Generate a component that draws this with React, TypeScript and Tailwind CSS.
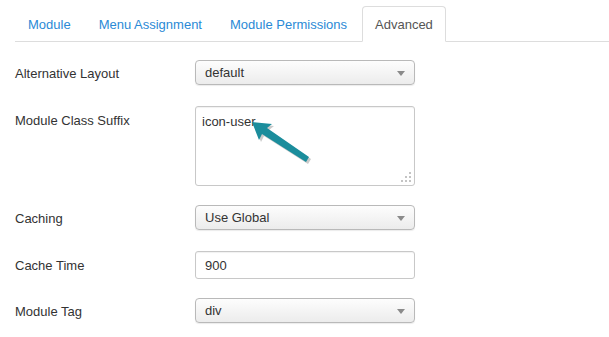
import React from "react";

const font = { fontFamily: '"Liberation Sans", Arial, sans-serif' };

function Select({ value }: { value: string }) {
  return (
    <div className="relative flex h-[25px] w-[220px] items-center rounded-[4px] border border-[#b9b9b9] bg-gradient-to-b from-[#fdfdfd] to-[#ececec] pl-[9px] pt-[1px] text-[13px] text-[#333] shadow-[0_1px_1px_rgba(0,0,0,0.08)]">
      <span>{value}</span>
      <svg className="absolute right-[9px] top-[10px]" width="8" height="5" viewBox="0 0 8 5">
        <polygon points="0,0 8,0 4,5" fill="#8a8a8a" />
      </svg>
    </div>
  );
}

function Row({ label, children, pt, mb }: { label: string; children: React.ReactNode; pt: string; mb: string }) {
  return (
    <div className={`flex ${mb}`}>
      <div className={`w-[180px] text-[13px] leading-[18px] text-[#333] ${pt}`}>{label}</div>
      <div>{children}</div>
    </div>
  );
}

const arrowPts = "2,4 22,6 17,10 59,39 56,44 12,16 9,22";

export default function App() {
  const tabs = ["Module", "Menu Assignment", "Module Permissions"];
  return (
    <div className="h-[337px] w-[609px] overflow-hidden bg-white pt-[6px] pl-[15px]" style={font}>
      <div className="flex border-b border-[#ddd]">
        {tabs.map((t) => (
          <div
            key={t}
            className="mr-[2px] mb-[-1px] rounded-t-[4px] border border-transparent px-[12px] pt-[9px] pb-[7px] text-[13px] leading-[18px] text-[#2b8ad6]"
          >
            {t}
          </div>
        ))}
        <div className="mb-[-1px] rounded-t-[4px] border border-[#ddd] border-b-white bg-white px-[12px] pt-[9px] pb-[7px] text-[13px] leading-[18px] text-[#555]">
          Advanced
        </div>
      </div>

      <div className="mt-[18px]">
        <Row label="Alternative Layout" pt="pt-[5px]" mb="mb-[21px]">
          <Select value="default" />
        </Row>
        <Row label="Module Class Suffix" pt="pt-[6px]" mb="mb-[19px]">
          <div className="relative h-[80px] w-[220px] rounded-[3px] border border-[#c8c8c8] bg-white pl-[6px] pt-[6px] text-[13px] leading-[18px] text-[#333] shadow-[inset_0_1px_1px_rgba(0,0,0,0.06)]">
            icon-user
            <svg className="absolute bottom-[2px] right-[2px]" width="12" height="12" viewBox="0 0 12 12">
              <rect x="9" y="1" width="2" height="2" fill="#c4c4c4" />
              <rect x="5" y="5" width="2" height="2" fill="#c4c4c4" />
              <rect x="9" y="5" width="2" height="2" fill="#c4c4c4" />
              <rect x="1" y="9" width="2" height="2" fill="#c4c4c4" />
              <rect x="5" y="9" width="2" height="2" fill="#c4c4c4" />
              <rect x="9" y="9" width="2" height="2" fill="#c4c4c4" />
            </svg>
            <svg className="absolute left-[54px] top-[11px]" width="66" height="52" viewBox="0 0 66 52">
              <polygon points={arrowPts} fill="#8a8a8a" opacity="0.45" transform="translate(2,2)" />
              <polygon points={arrowPts} fill="#1b8d9c" />
            </svg>
          </div>
        </Row>
        <Row label="Caching" pt="pt-[5px]" mb="mb-[21px]">
          <Select value="Use Global" />
        </Row>
        <Row label="Cache Time" pt="pt-[6px]" mb="mb-[19px]">
          <div className="flex h-[28px] w-[220px] items-center rounded-[3px] border border-[#c8c8c8] bg-white pl-[9px] pt-[1px] text-[13px] text-[#333] shadow-[inset_0_1px_1px_rgba(0,0,0,0.06)]">
            900
          </div>
        </Row>
        <Row label="Module Tag" pt="pt-[5px]" mb="mb-0">
          <Select value="div" />
        </Row>
      </div>
    </div>
  );
}
